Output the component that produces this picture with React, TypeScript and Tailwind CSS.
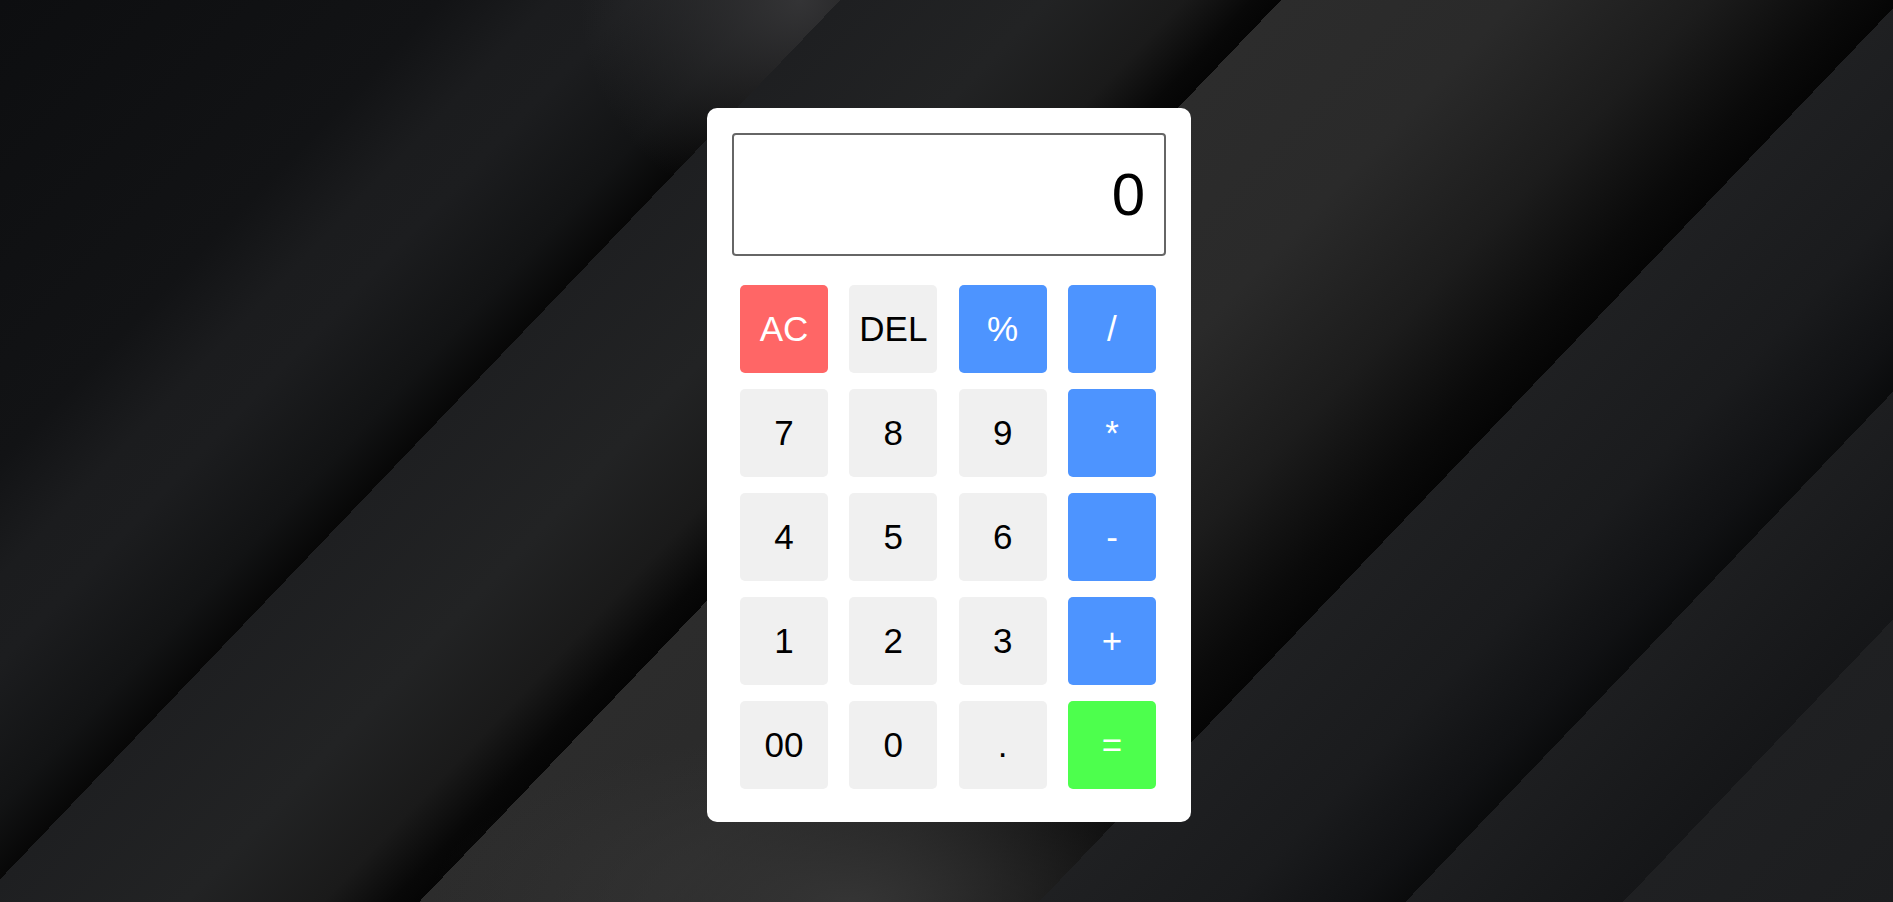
import { useState } from "react";

type Key = {
  label: string;
  kind: "clear" | "del" | "op" | "num" | "eq";
};

const keys: Key[] = [
  { label: "AC", kind: "clear" },
  { label: "DEL", kind: "del" },
  { label: "%", kind: "op" },
  { label: "/", kind: "op" },
  { label: "7", kind: "num" },
  { label: "8", kind: "num" },
  { label: "9", kind: "num" },
  { label: "*", kind: "op" },
  { label: "4", kind: "num" },
  { label: "5", kind: "num" },
  { label: "6", kind: "num" },
  { label: "-", kind: "op" },
  { label: "1", kind: "num" },
  { label: "2", kind: "num" },
  { label: "3", kind: "num" },
  { label: "+", kind: "op" },
  { label: "00", kind: "num" },
  { label: "0", kind: "num" },
  { label: ".", kind: "num" },
  { label: "=", kind: "eq" },
];

const keyStyles: Record<Key["kind"], string> = {
  clear: "bg-[#ff6666] text-white",
  del: "bg-[#f0f0f0] text-black",
  op: "bg-[#4d94ff] text-white",
  num: "bg-[#f0f0f0] text-black",
  eq: "bg-[#4dff4d] text-white",
};

const App = () => {
  const [value, setValue] = useState("0");

  const press = (key: Key) => {
    if (key.kind === "clear") return setValue("0");
    if (key.kind === "del") return setValue((v) => (v.length > 1 ? v.slice(0, -1) : "0"));
    if (key.kind === "eq") {
      try {
        const result = Function(`return (${value})`)();
        setValue(String(result));
      } catch {
        setValue("Error");
      }
      return;
    }
    setValue((v) => (v === "0" || v === "Error" ? key.label : v + key.label));
  };

  return (
    // dark diagonal folds behind the calculator
    <div className="min-h-screen w-full flex justify-center pt-[108px] pl-[5px] font-['Liberation_Sans',Arial,sans-serif] bg-[#1c1d1f] bg-[image:linear-gradient(133.7deg,transparent_69%,#1f2022_69%,#1a1b1d_76%,#101113_80.5%,#0a0b0c_82.3%,#1d1e20_82.3%,#151618_90.2%,#1f2022_90.2%,#1c1d1f_100%),radial-gradient(ellipse_420px_170px_at_850px_902px,rgba(54,54,54,0.95),transparent),linear-gradient(133.7deg,transparent_30.5%,#1e1f21_30.5%,#222324_38%,#1a1a1a_43%,#080808_45.5%,#050505_46.5%,#2c2c2c_46.5%,#2a2a2a_55%,#1c1c1c_62%,#0a0a0a_67%,#050505_69%,transparent_69%),radial-gradient(circle_at_800px_0px,rgba(56,56,58,0.9),transparent_220px),linear-gradient(133.7deg,#0d0e10_0%,#121315_16%,#1b1c1e_20%,#1c1d1f_23%,#121314_28%,#070707_30.5%,#070707_100%)]">
      <div className="w-[484px] h-fit bg-white rounded-[10px] px-[25px] pt-[25px] pb-[33px]">
        <div className="h-[123px] border-2 border-[#666666] rounded-[4px] flex items-center justify-end pr-[19px] text-[60px] text-black overflow-hidden">
          {value}
        </div>
        <div className="mt-[29px] grid grid-cols-[repeat(4,88px)] justify-between gap-y-[16px] pl-[8px] pr-[10px]">
          {keys.map((key) => (
            <button
              key={key.label}
              onClick={() => press(key)}
              className={`h-[88px] rounded-[5px] text-[35px] flex items-center justify-center cursor-pointer ${keyStyles[key.kind]}`}
            >
              {key.label}
            </button>
          ))}
        </div>
      </div>
    </div>
  );
};

export default App;
